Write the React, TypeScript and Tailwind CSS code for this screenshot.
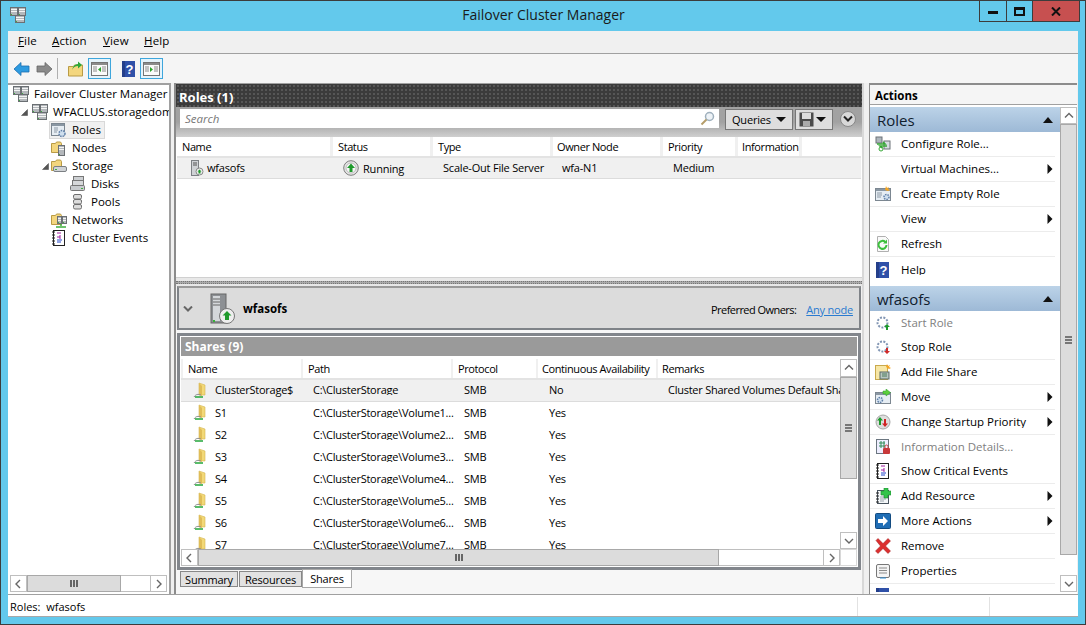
import React from "react";

const Svg = ({ children, s = 16 }: { children: React.ReactNode; s?: number }) => (
  <svg width={s} height={s} viewBox="0 0 16 16" className="shrink-0">{children}</svg>
);

const Srv = ({ x, y, w = 5, h = 7 }: { x: number; y: number; w?: number; h?: number }) => (
  <g>
    <rect x={x + 0.5} y={y + 0.5} width={w} height={h} fill="#b4b8bc" stroke="#6b6f73" />
    <path d={`M${x + 1} ${y + 2.5}h${w - 1}M${x + 1} ${y + 4.5}h${w - 1}`} stroke="#f4f4f4" />
    <rect x={x + 1} y={y + h - 1} width="1" height="1" fill="#3fae3f" />
  </g>
);
const Cluster = () => (
  <Svg>
    <Srv x={0} y={0} w={7} h={8} />
    <Srv x={8} y={0} w={7} h={8} />
    <Srv x={5} y={8} w={9} h={7} />
  </Svg>
);
const FolderBack = () => (
  <g>
    <path d="M0.5 3.5h4l1-1.5h4l1 1.5v9h-10z" fill="#f3d67e" stroke="#b99b45" />
  </g>
);
const RolesIcon = () => (
  <Svg>
    <rect x="0.5" y="1.5" width="13" height="12" fill="#e6edf3" stroke="#7c8791" />
    <rect x="1" y="2" width="12" height="2" fill="#8a97a3" />
    <path d="M3 6h4M3 8h4M3 10h3" stroke="#8d99a5" />
    <circle cx="11" cy="11.5" r="3" fill="#cfdfee" stroke="#5f7fa8" strokeDasharray="1.5 1" strokeWidth="1.5" />
  </Svg>
);
const Nodes = () => <Svg><FolderBack /><Srv x={7} y={5} w={6} h={10} /></Svg>;
const StorageI = () => (
  <Svg>
    <FolderBack />
    <rect x="2.5" y="8.5" width="13" height="5" rx="1.5" fill="#d0d3d6" stroke="#7b7f83" />
    <rect x="4" y="11" width="2" height="1" fill="#3fae3f" />
  </Svg>
);
const Disks = () => (
  <Svg>
    <rect x="3.5" y="0.5" width="10" height="5" fill="#cdd0d3" stroke="#777" />
    <rect x="2.5" y="4.5" width="11" height="5" fill="#d6d8da" stroke="#777" />
    <rect x="0.5" y="9.5" width="14" height="5" rx="1" fill="#c8cbce" stroke="#777" />
    <rect x="11" y="12" width="2" height="1" fill="#3fae3f" />
  </Svg>
);
const Pools = () => (
  <Svg>
    <rect x="3.5" y="0.5" width="8" height="4.5" rx="1.5" fill="#dcdcdc" stroke="#6f6f6f" />
    <rect x="3.5" y="5.5" width="8" height="4.5" rx="1.5" fill="#dcdcdc" stroke="#6f6f6f" />
    <rect x="3.5" y="10.5" width="8" height="4.5" rx="1.5" fill="#dcdcdc" stroke="#6f6f6f" />
  </Svg>
);
const Networks = () => (
  <Svg>
    <FolderBack />
    <Srv x={6} y={4} w={4} h={7} />
    <Srv x={11} y={4} w={4} h={7} />
    <path d="M10 12v2M5 15h10" stroke="#3fae3f" strokeWidth="1.5" />
  </Svg>
);
const Events = () => (
  <Svg>
    <rect x="2.5" y="0.5" width="11" height="15" fill="#fff" stroke="#222" />
    <path d="M1 2h3M1 5h3M1 8h3M1 11h3M1 14h3" stroke="#222" />
    <path d="M6 3h4M9 5v4M6 7h3" stroke="#a01fa0" />
    <path d="M6 10h5M6 12h4" stroke="#2347c8" />
  </Svg>
);
const HelpI = () => (
  <Svg>
    <rect x="1" y="0" width="13" height="16" fill="#2f50a8" />
    <rect x="1" y="0" width="3" height="16" fill="#243f8a" />
    <text x="8.5" y="13" fontSize="13" fontWeight="700" fill="#fff" textAnchor="middle" fontFamily="Liberation Sans">?</text>
  </Svg>
);
const PaneIcon = ({ right }: { right?: boolean }) => (
  <div className="flex h-[21px] w-[23px] items-center justify-center border border-[#3ea6dc] bg-[#e5f3fb]">
    <svg width="17" height="14" viewBox="0 0 17 14">
      <rect x="0.5" y="0.5" width="16" height="13" fill="#fafafa" stroke="#747474" />
      <rect x="1" y="1" width="15" height="2" fill="#8b8b8b" />
      <path d="M2 5h4M2 7h4M2 9h4M11 5h4M11 7h4M11 9h4" stroke="#8b8b8b" />
      {right ? <path d="M7 5l3 2.5l-3 2.5z" fill="#28a428" /> : <path d="M10 5l-3 2.5l3 2.5z" fill="#28a428" />}
    </svg>
  </div>
);
const Up = ({ s = 16 }: { s?: number }) => (
  <Svg s={s}>
    <circle cx="8" cy="8" r="7.3" fill="#e4e4e4" stroke="#7d7d7d" />
    <circle cx="8" cy="8" r="5" fill="#f7f7f7" stroke="#bdbdbd" />
    <path d="M8 3.5L12 8H9.5v4h-3V8H4z" fill="#1f9a2c" />
  </Svg>
);
const SmallServer = () => (
  <Svg>
    <rect x="2.5" y="0.5" width="7" height="15" fill="#cfd2d5" stroke="#7c8084" />
    <path d="M4 3h4M4 5h4" stroke="#555" />
    <circle cx="10.5" cy="11.5" r="3.5" fill="#eee" stroke="#888" />
    <path d="M10.5 9.5l2 2h-1v2h-2v-2h-1z" fill="#1f9a2c" />
  </Svg>
);
const ShareI = () => (
  <Svg>
    <path d="M6 1l6 2v10H6z" fill="#f2d877" stroke="#d3b653" strokeWidth="0.6" />
    <path d="M6 1l3 3v10l-3-1z" fill="#e0bd58" />
    <path d="M1 15c2-3 4-3 7-2" fill="none" stroke="#8b8b8b" />
    <path d="M2 15h8" stroke="#22a63a" strokeWidth="1.5" />
  </Svg>
);
const Gear = ({ c }: { c: string }) => (
  <Svg>
    <circle cx="7.5" cy="7.5" r="5" fill="#fff" stroke="#8296b4" strokeWidth="2" strokeDasharray="2 1.4" />
    <path d={c === "g" ? "M12 9l3 3h-2v3h-2v-3H9z" : "M11 9h2v3h2l-3 3l-3-3h2z"} fill={c === "g" ? "#1f9a2c" : "#cf2a2a"} />
  </Svg>
);
const Configure = () => (
  <Svg>
    <rect x="1" y="1" width="6" height="6" fill="#aeb6bd" stroke="#6c7379" />
    <rect x="9" y="5" width="6" height="8" fill="#d7dde3" stroke="#6c7379" />
    <path d="M2 8h8l-2-2M12 10H5l2 2" fill="none" stroke="#35a835" strokeWidth="1.6" />
    <circle cx="6" cy="13" r="2" fill="none" stroke="#35a835" />
  </Svg>
);
const EmptyRole = () => (
  <Svg>
    <rect x="0.5" y="2.5" width="15" height="12" fill="#e6edf3" stroke="#7c8791" />
    <rect x="1" y="3" width="14" height="2" fill="#8a97a3" />
    <path d="M2 7h5M2 9h5M2 11h4" stroke="#8d99a5" />
    <circle cx="11.5" cy="11" r="2.5" fill="#cfdfee" stroke="#5f7fa8" strokeWidth="1.5" strokeDasharray="1.5 1" />
    <path d="M11 0l1 2l2-1l-1 2l2 1l-2 1l-3-1z" fill="#f5a623" />
  </Svg>
);
const RefreshI = () => (
  <Svg>
    <path d="M2.5 0.5h8l3 3v12h-11z" fill="#fafafa" stroke="#b0b0b0" />
    <path d="M11.5 9a4 4 0 1 1-1.2-3" fill="none" stroke="#3cc03c" strokeWidth="2" />
    <path d="M12 3.5v4h-4z" fill="#3cc03c" />
  </Svg>
);
const AddShare = () => (
  <Svg>
    <rect x="0.5" y="1.5" width="12" height="14" fill="#f7e7a6" stroke="#c9a94c" />
    <rect x="5" y="8" width="9" height="7" fill="#b7c6c0" stroke="#5a6a66" />
    <path d="M7 10h5M7 12h5" stroke="#4d7a5a" />
    <path d="M12 0l1 2l2-1l-1 2l2 1l-2 1l-3-2z" fill="#f5a623" />
  </Svg>
);
const MoveI = () => (
  <Svg>
    <rect x="0.5" y="3.5" width="15" height="11" fill="#e6edf3" stroke="#7c8791" />
    <rect x="1" y="4" width="14" height="2" fill="#8a97a3" />
    <circle cx="5" cy="11" r="2.5" fill="#cfdfee" stroke="#5f7fa8" strokeWidth="1.5" strokeDasharray="1.5 1" />
    <path d="M8 2h3V0l4.5 3.5L11 7V5H8z" fill="#5ccf3c" stroke="#2d9a2d" strokeWidth="0.5" />
  </Svg>
);
const Priority = () => (
  <Svg>
    <circle cx="8" cy="8" r="7" fill="#dedede" stroke="#a8a8a8" />
    <path d="M5 3l3 3.5H6V11H4V6.5H2z" fill="#1f9a2c" />
    <path d="M10 13l-3-3.5h2V5h2v4.500h2z" fill="#d02525" />
  </Svg>
);
const InfoD = () => (
  <Svg>
    <rect x="1.5" y="0.5" width="12" height="14" fill="#eef" stroke="#6b7680" />
    <path d="M4 4h6M4 7h6M6 2v7M9 2v7" stroke="#2e8b57" />
    <rect x="8" y="9" width="7" height="6" rx="1" fill="#c8383a" />
    <path d="M10 9V7.500a1.500 1.500 0 0 1 3 0V9" fill="none" stroke="#c8383a" />
  </Svg>
);
const AddRes = () => (
  <Svg>
    <rect x="2.5" y="2.500" width="11" height="13" fill="#f3f6f8" stroke="#4a5560" />
    <path d="M1 5h3M1 8h3M1 11h3M1 14h3" stroke="#222" />
    <path d="M5 9h6M5 11h6M5 13h4" stroke="#9aa3ab" />
    <path d="M9 0h4v3h3v4h-3v3H9V7H6V3h3z" fill="#33c44a" stroke="#1f8a30" strokeWidth="0.6" />
  </Svg>
);
const MoreI = () => (
  <Svg>
    <rect x="0.5" y="0.5" width="15" height="15" rx="1" fill="#1f6db5" stroke="#134b80" />
    <path d="M3 6h5V3l5 5l-5 5v-3H3z" fill="#fff" />
  </Svg>
);
const RemoveI = () => (
  <Svg>
    <path d="M1 2.500L3 0.500L8 5.500L13 0.500L15.500 3L10.500 8L15.500 13L13 15.500L8 10.500L3 15.500L0.500 13L5.500 8z" fill="#dc2f2f" stroke="#9f1e1e" strokeWidth="0.5" />
  </Svg>
);
const PropsI = () => (
  <Svg>
    <rect x="1.500" y="1.500" width="13" height="13" rx="1.500" fill="#f4f4f4" stroke="#777" />
    <path d="M4 5h8M4 7.500h8M4 10h8" stroke="#8b8b8b" />
    <path d="M5 15h6" stroke="#2f8fd8" strokeWidth="1" />
  </Svg>
);

const Expander = () => (
  <svg width="7" height="7" viewBox="0 0 7 7" className="shrink-0"><path d="M6.500 0.500v6h-6z" fill="#555" stroke="#444" strokeWidth="0.5" /></svg>
);
const Chev = ({ d }: { d: "l" | "r" | "u" | "d" }) => {
  const p = { l: "M6 1L2 5l4 4", r: "M3 1l4 4l-4 4", u: "M1 6.500l4-4l4 4", d: "M1 3l4 4l4-4" }[d];
  return <svg width="10" height="10" viewBox="0 0 10 10"><path d={p} fill="none" stroke="#666" strokeWidth="1.400" /></svg>;
};
const GripV = () => (
  <div className="flex flex-col gap-px">
    <div className="h-[2px] w-[7px] bg-[#777]" /><div className="h-[2px] w-[7px] bg-[#777]" /><div className="h-[2px] w-[7px] bg-[#777]" />
  </div>
);
const GripH = () => (
  <div className="flex gap-px">
    <div className="h-[7px] w-[2px] bg-[#666]" /><div className="h-[7px] w-[2px] bg-[#666]" /><div className="h-[7px] w-[2px] bg-[#666]" />
  </div>
);
const ArrowBox = ({ d, cls }: { d: "l" | "r" | "u" | "d"; cls: string }) => (
  <div className={`flex shrink-0 items-center justify-center border border-[#bfbfbf] bg-white ${cls}`}><Chev d={d} /></div>
);

const tree: { label: string; icon: React.ReactNode; indent: string; exp?: string; sel?: boolean }[] = [
  { label: "Failover Cluster Manager", icon: <Cluster />, indent: "pl-[4px]" },
  { label: "WFACLUS.storagedomain.local", icon: <Cluster />, indent: "pl-[13px]", exp: "w-[10px]" },
  { label: "Roles", icon: <RolesIcon />, indent: "pl-[41px]", sel: true },
  { label: "Nodes", icon: <Nodes />, indent: "pl-[42px]" },
  { label: "Storage", icon: <StorageI />, indent: "pl-[34px]", exp: "w-[8px]" },
  { label: "Disks", icon: <Disks />, indent: "pl-[61px]" },
  { label: "Pools", icon: <Pools />, indent: "pl-[61px]" },
  { label: "Networks", icon: <Networks />, indent: "pl-[42px]" },
  { label: "Cluster Events", icon: <Events />, indent: "pl-[42px]" },
];

const shares = [
  ["ClusterStorage$", "C:\\ClusterStorage", "No", "Cluster Shared Volumes Default Share"],
  ["S1", "C:\\ClusterStorage\\Volume1...", "Yes", ""],
  ["S2", "C:\\ClusterStorage\\Volume2...", "Yes", ""],
  ["S3", "C:\\ClusterStorage\\Volume3...", "Yes", ""],
  ["S4", "C:\\ClusterStorage\\Volume4...", "Yes", ""],
  ["S5", "C:\\ClusterStorage\\Volume5...", "Yes", ""],
  ["S6", "C:\\ClusterStorage\\Volume6...", "Yes", ""],
  ["S7", "C:\\ClusterStorage\\Volume7...", "Yes", ""],
];

type Act = { label: string; icon?: React.ReactNode; sub?: boolean; dim?: boolean };
const rolesActs: Act[] = [
  { label: "Configure Role...", icon: <Configure /> },
  { label: "Virtual Machines...", sub: true },
  { label: "Create Empty Role", icon: <EmptyRole /> },
  { label: "View", sub: true },
  { label: "Refresh", icon: <RefreshI /> },
  { label: "Help", icon: <HelpI /> },
];
const wfaActs: Act[] = [
  { label: "Start Role", icon: <Gear c="g" />, dim: true },
  { label: "Stop Role", icon: <Gear c="r" /> },
  { label: "Add File Share", icon: <AddShare /> },
  { label: "Move", icon: <MoveI />, sub: true },
  { label: "Change Startup Priority", icon: <Priority />, sub: true },
  { label: "Information Details...", icon: <InfoD />, dim: true },
  { label: "Show Critical Events", icon: <Events /> },
  { label: "Add Resource", icon: <AddRes />, sub: true },
  { label: "More Actions", icon: <MoreI />, sub: true },
  { label: "Remove", icon: <RemoveI /> },
  { label: "Properties", icon: <PropsI /> },
  { label: "Help", icon: <HelpI /> },
];

const ActionRow = ({ a, last }: { a: Act; last?: boolean }) => (
  <div className={`flex shrink-0 items-center pl-[5px] ${a.dim ? "h-[24px]" : "mr-[5px] h-[25px] border-b border-[#ececec]"} ${last ? "border-b-0" : ""}`}>
    <div className="flex w-[26px] shrink-0 justify-start">{a.icon}</div>
    <span className={`grow truncate ${a.dim ? "text-[#808080]" : "text-black"}`}>{a.label}</span>
    {a.sub && <svg width="6" height="10" viewBox="0 0 6 10" className="mr-[2px]"><path d="M0.500 0v10l5-5z" fill="#111" /></svg>}
  </div>
);
const ActionHead = ({ t }: { t: string }) => (
  <div className="flex h-[25px] shrink-0 items-center justify-between bg-gradient-to-b from-[#bcd3e8] to-[#9db9d6] pl-[7px] pr-[7px] pt-px text-[15px] text-[#10202e]">
    <span>{t}</span>
    <svg width="10" height="6" viewBox="0 0 10 6"><path d="M5 0l5 6H0z" fill="#111" /></svg>
  </div>
);

const App = () => (
  <div className="flex h-[625px] w-[1086px] flex-col overflow-hidden border border-[#3c3c3c] bg-[#63c9ec] font-['Open_Sans','Noto_Sans',sans-serif] text-[11.5px] leading-none text-black">
    {/* title bar */}
    <div className="flex h-[30px] shrink-0 items-start">
      <div className="ml-[9px] mt-[6px]"><Cluster /></div>
      <div className="mt-[7px] grow pl-[82px] text-center text-[14px] text-[#1a1a1a]">Failover Cluster Manager</div>
      <div className="mr-[5px] flex h-[21px] border-x border-b border-[#3c3c3c]">
        <div className="flex w-[27px] items-center justify-center border-r border-[#3c3c3c]"><div className="mt-[3px] h-[3px] w-[10px] bg-[#111]" /></div>
        <div className="flex w-[26px] items-center justify-center border-r border-[#3c3c3c]"><div className="h-[9px] w-[11px] border-2 border-t-[3px] border-[#111]" /></div>
        <div className="flex w-[46px] items-center justify-center bg-[#c75050]">
          <svg width="10" height="9" viewBox="0 0 10 9"><path d="M1 0.500l8 8M9 0.500l-8 8" stroke="#111" strokeWidth="2" /></svg>
        </div>
      </div>
    </div>

    {/* client */}
    <div className="mx-[7px] flex min-h-0 grow flex-col bg-[#f0f0f0]">
      <div className="flex h-[23px] shrink-0 items-center border-b border-[#a0a0a0] bg-[#f0f0f0] pb-[2px] pl-[10px] tracking-[0.15px]">
        <span className="w-[34px]"><u>F</u>ile</span>
        <span className="w-[51px]"><u>A</u>ction</span>
        <span className="w-[41px]"><u>V</u>iew</span>
        <span><u>H</u>elp</span>
      </div>
      <div className="flex h-[29px] shrink-0 items-center bg-[#f5f5f5] pl-[5px]">
        <svg width="17" height="14" viewBox="0 0 17 14"><path d="M1 7l7-6.500V4h8v6H8v3.500z" fill="#2e9be0" stroke="#1d6fb0" strokeWidth="0.8" /></svg>
        <svg width="17" height="14" viewBox="0 0 17 14" className="ml-[6px]"><path d="M16 7L9 0.500V4H1v6h8v3.500z" fill="#8a8a8a" stroke="#666" strokeWidth="0.8" /></svg>
        <div className="ml-[4px] h-[21px] w-px bg-[#b0b0b0]" />
        <svg width="15" height="16" viewBox="0 0 15 16" className="ml-[10px]"><path d="M0.500 5.500h5l1-1.500h8v11h-14z" fill="#f3d67e" stroke="#b99b45" /><path d="M4 9c1-4 3-6 6-6V0.500L14 4l-4 3.500V5C7 5 5.500 6.500 4 9z" fill="#2ea83a" /></svg>
        <div className="ml-[5px]"><PaneIcon /></div>
        <div className="ml-[10px]"><HelpI /></div>
        <div className="ml-[3px]"><PaneIcon right /></div>
      </div>

      {/* panes */}
      <div className="flex min-h-0 grow">
        {/* tree */}
        <div className="flex w-[163px] shrink-0 flex-col border-r-2 border-t-2 border-[#a0a0a0] bg-white">
          <div className="grow overflow-hidden">
            {tree.map((t) => (
              <div key={t.label} className={`flex h-[18px] items-center whitespace-nowrap ${t.indent}`}>
                {t.exp && <div className={`${t.exp} shrink-0`}><Expander /></div>}
                <div className={`flex h-[18px] items-center gap-[5px] pl-[1px] pr-[3px] ${t.sel ? "border border-[#d9d9d9] bg-[#f0f0f0]" : ""}`}>
                  {t.icon}<span>{t.label}</span>
                </div>
              </div>
            ))}
          </div>
          <div className="mx-[2px] mb-[2px] flex h-[17px] shrink-0">
            <ArrowBox d="l" cls="w-[17px]" />
            <div className="flex w-[94px] items-center justify-center border border-[#a8a8a8] bg-[#dcdcdc]"><GripH /></div>
            <div className="grow border-y border-[#bfbfbf]" />
            <ArrowBox d="r" cls="w-[17px]" />
          </div>
        </div>

        {/* centre */}
        <div className="ml-[3px] flex w-[690px] shrink-0 flex-col border-x-2 border-[#8c8c8c] border-r-[#d8d8d8]">
          <div className="flex h-[24px] shrink-0 items-center border-t border-[#a0a0a0] bg-[#3b3b3b] bg-[radial-gradient(#565656_1px,transparent_1px)] bg-[length:4px_4px] pl-[3px] pt-[3px] text-[13px] font-bold text-white">Roles (1)</div>
          <div className="flex h-[30px] shrink-0 items-start bg-gradient-to-b from-[#a2a2a2] via-[#a2a2a2] to-[#cfcfcf] pl-[4px] pt-[2px]">
            <div className="flex h-[19px] w-[539px] shrink-0 items-center justify-between bg-white pl-[5px] pr-[4px] italic text-[#777]">
              <span>Search</span>
              <svg width="15" height="15" viewBox="0 0 15 15"><circle cx="9.500" cy="5.500" r="4" fill="#eef3f7" stroke="#9fb0bd" strokeWidth="1.500" /><path d="M6.500 8.500L1.500 13.500" stroke="#b59d6a" strokeWidth="2" /></svg>
            </div>
            <div className="ml-[6px] flex h-[21px] w-[68px] shrink-0 items-center justify-between border border-[#777] bg-[#dedede] pl-[6px] pr-[6px] text-[11px] tracking-[-0.2px]">
              <span>Queries</span>
              <svg width="10" height="5" viewBox="0 0 10 5"><path d="M0 0h10L5 5z" fill="#111" /></svg>
            </div>
            <div className="ml-[2px] flex h-[21px] w-[38px] shrink-0 items-center justify-between border border-[#777] bg-[#dedede] pl-[3px] pr-[6px]">
              <svg width="15" height="15" viewBox="0 0 15 15"><rect x="0.500" y="0.500" width="14" height="14" fill="#4b4b4b" /><rect x="3" y="1" width="9" height="6" fill="#ddd" /><rect x="4" y="9" width="7" height="5" fill="#aaa" /></svg>
              <svg width="10" height="5" viewBox="0 0 10 5"><path d="M0 0h10L5 5z" fill="#111" /></svg>
            </div>
            <div className="ml-[7px] mt-[2px] flex h-[16px] w-[16px] shrink-0 items-center justify-center rounded-full border border-[#888] bg-[#d8d8d8]">
              <svg width="10" height="8" viewBox="0 0 10 8"><path d="M1 1.500l4 4l4-4" fill="none" stroke="#222" strokeWidth="2" /></svg>
            </div>
          </div>

          <div className="flex h-[141px] shrink-0 flex-col border-b border-[#d0d0d0] bg-white px-px">
            <div className="flex h-[21px] shrink-0 gap-[3px] border-b-2 border-[#e3e3e3] bg-[#f0f0f0] text-[11px] tracking-[-0.4px]">
              <div className="w-[153px] bg-white pl-[5px] pt-[4px]">Name</div>
              <div className="w-[97px] bg-white pl-[5px] pt-[4px]">Status</div>
              <div className="w-[117px] bg-white pl-[5px] pt-[4px]">Type</div>
              <div className="w-[107px] bg-white pl-[4px] pt-[4px]">Owner Node</div>
              <div className="w-[72px] bg-white pl-[5px] pt-[4px]">Priority</div>
              <div className="w-[61px] bg-white pl-[4px] pt-[4px]">Information</div>
              <div className="grow bg-white" />
            </div>
            <div className="flex h-[21px] shrink-0 items-center border-b border-[#dcdcdc] bg-[#f0f0f0] pb-px text-[11px] tracking-[-0.2px]">
              <div className="flex w-[166px] items-center gap-[2px] pl-[12px]"><SmallServer /><span>wfasofs</span></div>
              <div className="flex w-[100px] items-center gap-[4px]"><Up /><span className="mt-px">Running</span></div>
              <div className="w-[119px] whitespace-nowrap">Scale-Out File Server</div>
              <div className="w-[111px]">wfa-N1</div>
              <div>Medium</div>
            </div>
          </div>

          <div className="flex h-[8px] shrink-0 items-center bg-[#e8e8e8]">
            <div className="h-[3px] w-full border-y border-dotted border-[#777] bg-[#aaa]" />
          </div>

          <div className="mx-[1px] flex h-[44px] shrink-0 items-center border-2 border-[#7f8388] border-t-[#9a9a9a] bg-[#dcdcdc] pt-[2px]">
            <svg width="10" height="6" viewBox="0 0 10 6" className="ml-[4px]"><path d="M1 0.500l4 4l4-4" fill="none" stroke="#666" strokeWidth="2" /></svg>
            <svg width="26" height="32" viewBox="0 0 26 32" className="ml-[17px]">
              <rect x="1" y="1" width="15" height="29" fill="#8d9094" stroke="#666" />
              <rect x="3" y="3" width="7" height="25" fill="#d4d7da" />
              <path d="M3 6h7M3 9h7M3 12h7" stroke="#666" />
              <rect x="3" y="27" width="2" height="2" fill="#36b336" />
              <circle cx="17" cy="23" r="7.500" fill="#eee" stroke="#777" />
              <path d="M17 18l4.500 4.500H19V27h-4v-4.500h-2.500z" fill="#1f9a2c" />
            </svg>
            <span className="ml-[7px] grow font-bold">wfasofs</span>
            <span className="text-[11px] tracking-[-0.55px]">Preferred Owners:</span>
            <span className="ml-[10px] mr-[6px] text-[11px] tracking-[-0.2px] text-[#2a7ad0] underline">Any node</span>
          </div>

          <div className="grow bg-[#f7f7f7] pt-[3px]">
            <div className="mx-[1px] flex h-[237px] flex-col border-[3px] border-[#82868c] bg-white p-px">
              <div className="flex h-[19px] shrink-0 items-center bg-[#9a9a9a] pl-[4px] text-[12px] font-bold text-white">Shares (9)</div>
              <div className="flex min-h-0 grow flex-col pt-[3px]">
                <div className="flex min-h-0 grow">
                  <div className="flex min-w-0 grow flex-col">
                    <div className="flex h-[21px] shrink-0 gap-[2px] border-b-2 border-[#e3e3e3] bg-[#f0f0f0] pl-[2px] text-[11px] tracking-[-0.4px]">
                      <div className="w-[118px] bg-white pl-[5px] pt-[4px]">Name</div>
                      <div className="w-[148px] bg-white pl-[5px] pt-[4px]">Path</div>
                      <div className="w-[83px] bg-white pl-[5px] pt-[4px]">Protocol</div>
                      <div className="w-[118px] whitespace-nowrap bg-white pl-[4px] pt-[4px]">Continuous Availability</div>
                      <div className="grow bg-white pl-[4px] pt-[4px]">Remarks</div>
                    </div>
                    <div className="min-h-0 grow overflow-hidden">
                      {shares.map((r, i) => (
                        <div key={r[0]} className={`flex h-[22px] items-center whitespace-nowrap pb-[2px] text-[11px] tracking-[-0.25px] ${i === 0 ? "border-b border-[#dcdcdc] bg-[#f0f0f0]" : ""}`}>
                          <div className="flex w-[132px] shrink-0 items-center gap-[6px] pl-[12px]"><ShareI /><span>{r[0]}</span></div>
                          <div className="w-[151px] shrink-0 overflow-hidden">{r[1]}</div>
                          <div className="w-[85px] shrink-0">SMB</div>
                          <div className="w-[119px] shrink-0">{r[2]}</div>
                          <div className="min-w-0 grow overflow-hidden">{r[3]}</div>
                        </div>
                      ))}
                    </div>
                  </div>
                  <div className="flex w-[17px] shrink-0 flex-col">
                    <ArrowBox d="u" cls="h-[18px]" />
                    <div className="flex h-[102px] items-center justify-center border border-[#a8a8a8] bg-[#dcdcdc]"><GripV /></div>
                    <div className="grow" />
                    <ArrowBox d="d" cls="h-[17px]" />
                  </div>
                </div>
                <div className="flex h-[17px] shrink-0">
                  <ArrowBox d="l" cls="w-[17px]" />
                  <div className="flex w-[521px] items-center justify-center border border-[#a8a8a8] bg-[#dcdcdc]"><GripH /></div>
                  <div className="grow border-y border-[#bfbfbf]" />
                  <ArrowBox d="r" cls="w-[17px]" />
                  <div className="w-[17px] border border-[#d8d8d8]" />
                </div>
              </div>
            </div>
            <div className="-mt-px flex h-[20px] items-start pl-[4px] text-[11px] tracking-[-0.2px]">
              <div className="mt-[2px] flex h-[16px] w-[58px] items-center justify-center border border-[#888] bg-[#e2e2e2]">Summary</div>
              <div className="ml-px mt-[2px] flex h-[16px] w-[63px] items-center justify-center border border-[#888] bg-[#e2e2e2]">Resources</div>
              <div className="flex h-[19px] w-[50px] items-center justify-center border border-[#a8a8a8] bg-white">Shares</div>
            </div>
          </div>
        </div>

        {/* actions */}
        <div className="ml-[5px] mr-px flex min-w-0 grow flex-col border-l border-t-2 border-[#8c8c8c] bg-white">
          <div className="flex h-[20px] shrink-0 items-center border-b border-[#a0a0a0] bg-[#f5f5f5] pl-[5px] pt-[3px] font-bold">Actions</div>
          <div className="flex min-h-0 grow pb-[2px] pt-[2px]">
            <div className="min-w-0 grow overflow-hidden">
              <ActionHead t="Roles" />
              {rolesActs.map((a, i) => <ActionRow key={a.label} a={a} last={i === rolesActs.length - 1} />)}
              <div className="h-[4px]" />
              <ActionHead t="wfasofs" />
              {wfaActs.map((a, i) => <ActionRow key={a.label + i} a={a} />)}
            </div>
            <div className="flex w-[17px] shrink-0 flex-col">
              <ArrowBox d="u" cls="h-[17px]" />
              <div className="flex h-[431px] items-center justify-center border border-[#a8a8a8] bg-[#dcdcdc]"><GripV /></div>
              <div className="grow" />
              <ArrowBox d="d" cls="h-[17px]" />
            </div>
          </div>
        </div>
      </div>

      {/* status */}
      <div className="flex h-[23px] shrink-0 items-center border-y border-b-[#a8a8a8] border-t-[#a0a0a0] bg-white pl-[2px] pt-[2px] text-[11px]">
        <span className="w-[847px] whitespace-pre">Roles:  wfasofs</span>
        <div className="h-full w-[133px] border-x border-[#e2e2e2]" />
      </div>
    </div>
    <div className="h-[7px] shrink-0" />
  </div>
);

export default App;
